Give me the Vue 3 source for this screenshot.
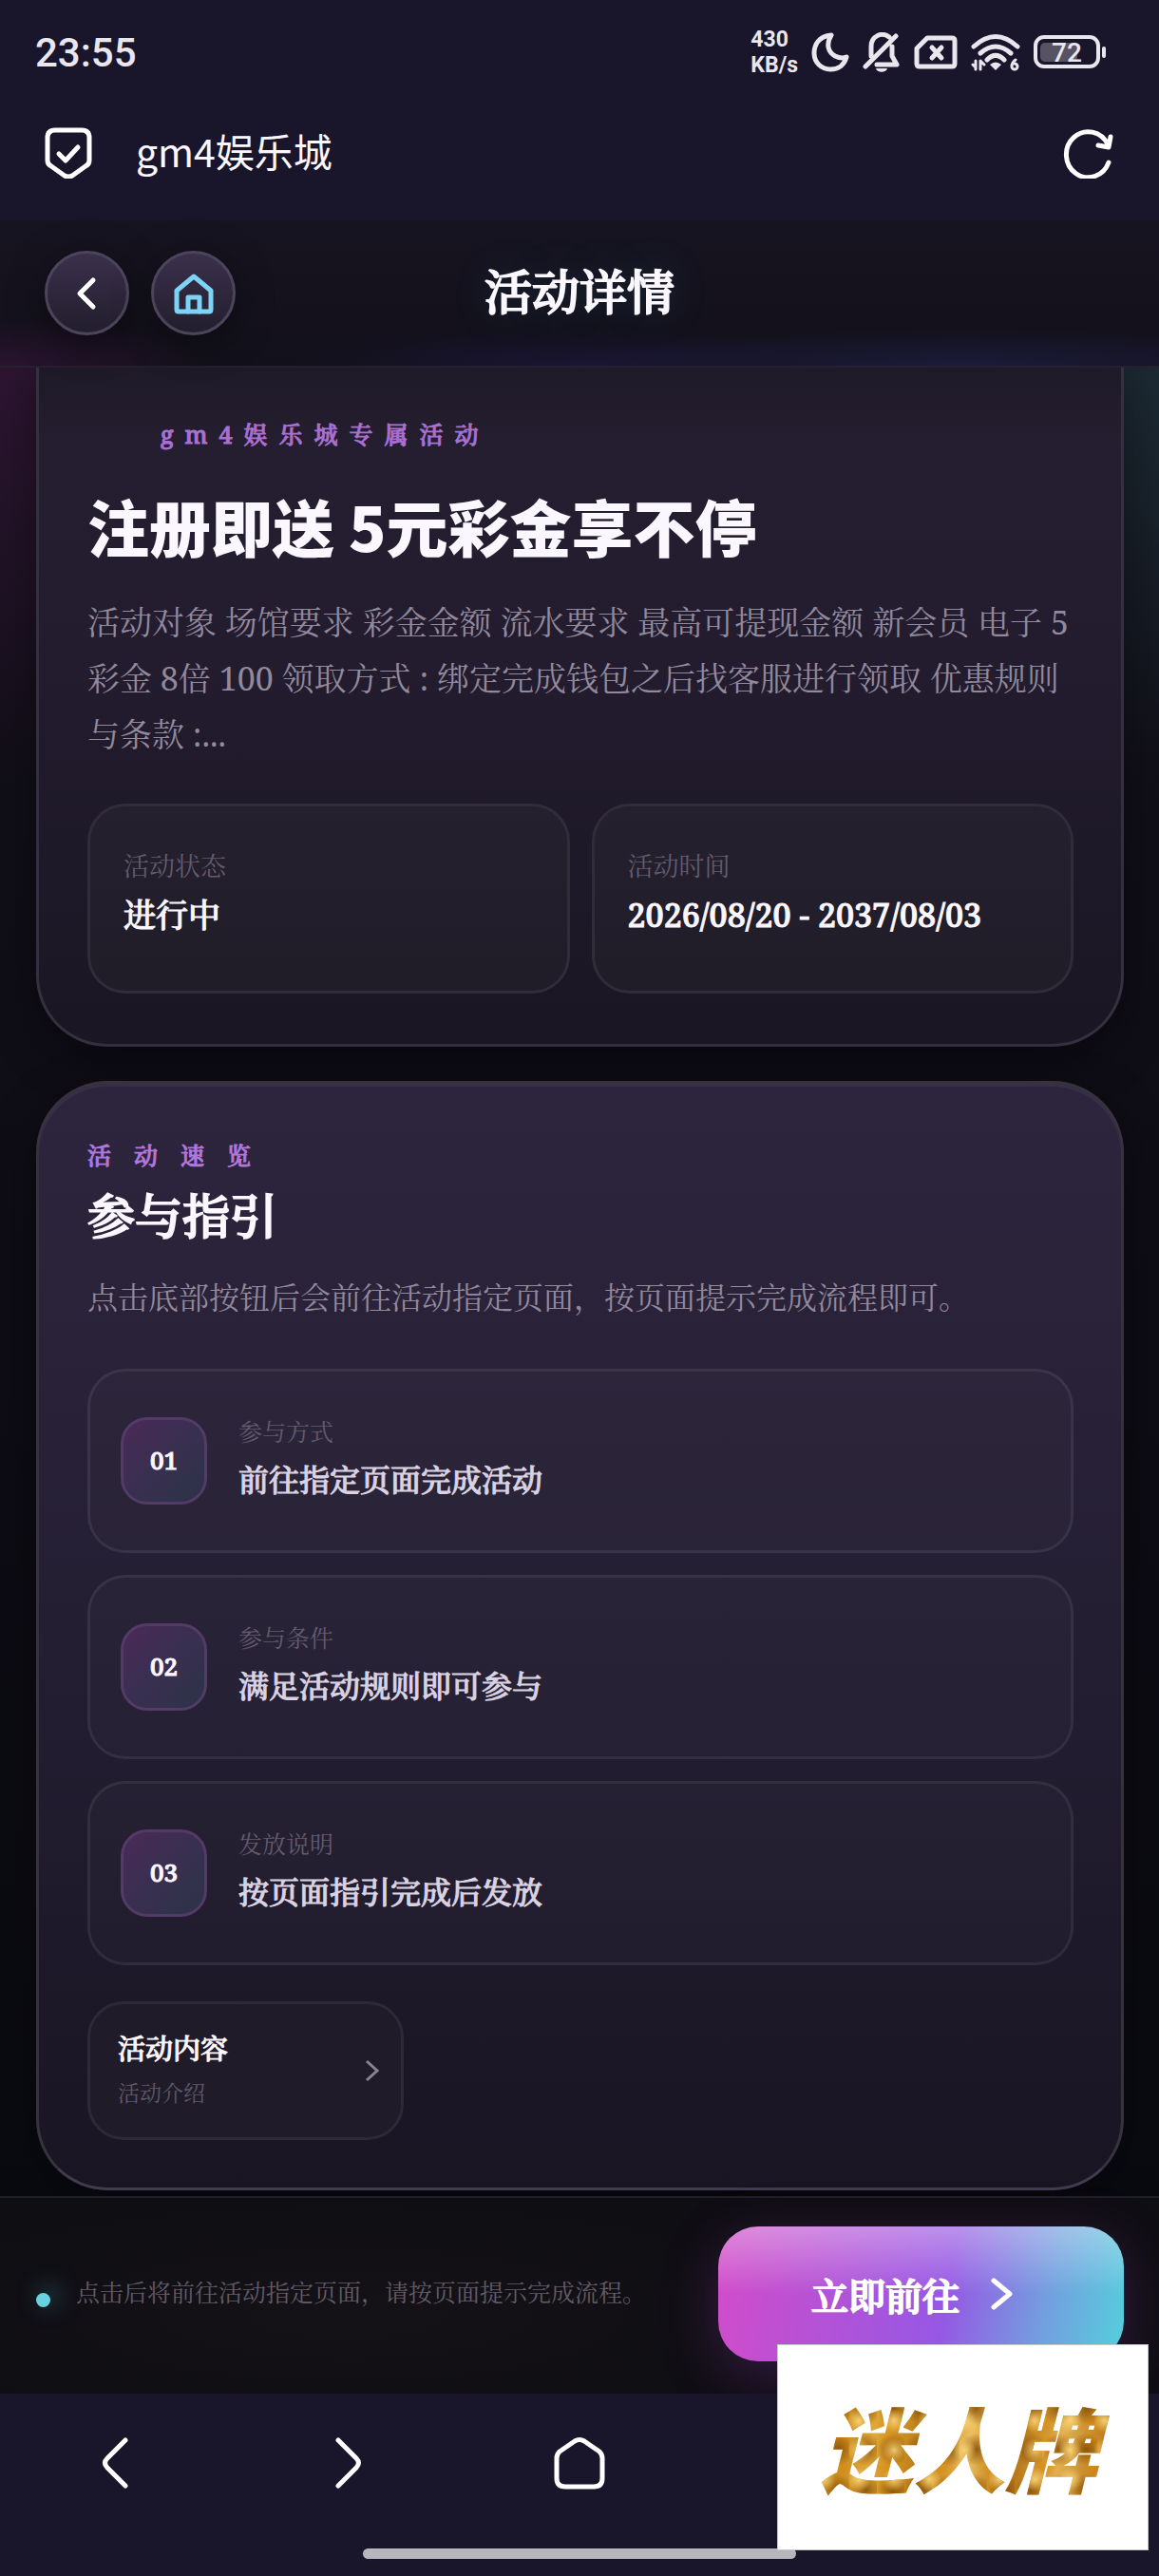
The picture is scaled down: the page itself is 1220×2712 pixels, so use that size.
<script setup>
import { ref } from 'vue';

const siteName = ref('gm4娱乐城');

const stats = [
  { label: '活动状态', value: '进行中' },
  { label: '活动时间', value: '2026/08/20 - 2037/08/03' },
];

const steps = [
  { no: '01', label: '参与方式', value: '前往指定页面完成活动' },
  { no: '02', label: '参与条件', value: '满足活动规则即可参与' },
  { no: '03', label: '发放说明', value: '按页面指引完成后发放' },
];
</script>

<template>
  <div class="page">
    <div class="status-bar">
      <span class="clock">23:55</span>
      <div class="status-icons">
        <span class="speed">430<br>KB/s</span>
        <svg class="i-moon" width="40" height="42" viewBox="0 0 40 42">
          <path d="M21 3C8 4 3 13 3 22c0 10 8 17 17 17s15-5 17-13c-4 2-8 1-12-1-7-4-10-12-4-22z" />
        </svg>
        <svg class="i-bell" width="40" height="42" viewBox="0 0 40 42">
          <path d="M3 36L35 4M28 5C20-1 9 4 9 15v10M31 15v10l5 9H15" />
          <path class="solid" d="M14 38h12c-1 5-11 5-12 0z" />
        </svg>
        <svg class="i-sim" width="46" height="36" viewBox="0 0 46 36">
          <path d="M14 3h26q3 0 3 3v24q0 3-3 3H6q-3 0-3-3V14z M19 13l10 11M29 13L19 24" />
        </svg>
        <svg class="i-wifi" width="52" height="40" viewBox="0 0 52 40">
          <path d="M3 14Q26-7 49 14M10 21Q26 7 42 21M17 28Q26 19 35 28" />
          <path class="solid" d="M20 33q6-5 12 0l-6 6z" />
          <path class="thin" d="M2 33l3 3V29M5 29v9M10 38V29l4 4M47 28q-4 3-4 7a3 3 0 1 0 3-3" />
        </svg>
        <svg class="i-battery" width="76" height="36" viewBox="0 0 76 36">
          <rect class="level" x="7" y="8" width="39" height="20" rx="5" />
          <rect class="shell" x="2" y="2" width="66" height="31" rx="9" />
          <rect class="solid" x="72" y="12" width="4" height="12" rx="2" />
          <text x="35" y="28" text-anchor="middle">72</text>
        </svg>
      </div>
    </div>

    <div class="browser-bar">
      <svg width="50" height="54" viewBox="0 0 50 54">
        <path d="M11 3h28q8 0 8 8v24q0 4-4 6L29 51q-4 2-8 0L7 41q-4-2-4-6V11q0-8 8-8z" />
        <path d="M15 28l7 7 13-14" />
      </svg>
      <span class="site">{{ siteName }}</span>
      <button class="plain" aria-label="刷新">
        <svg width="54" height="54" viewBox="0 0 54 54">
          <path d="M48 37A23 24 0 1 1 47 18" />
          <path d="M50 10l-2 11-11-2" />
        </svg>
      </button>
    </div>

    <header class="header">
      <div class="header-buttons">
        <button class="round" aria-label="返回">
          <svg width="40" height="40" viewBox="0 0 40 40"><path d="M26 6L12 20l14 14" /></svg>
        </button>
        <button class="round home" aria-label="首页">
          <svg width="44" height="44" viewBox="0 0 44 44">
            <path d="M4 19L22 4l18 15v20q0 2-2 2H6q-2 0-2-2z" />
            <path d="M16 41V26h12v15" />
          </svg>
        </button>
      </div>
      <h1>活动详情</h1>
    </header>

    <main class="content">
      <section class="card hero">
        <p class="eyebrow">gm4娱乐城专属活动</p>
        <h2>注册即送 5元彩金享不停</h2>
        <p class="desc">
          活动对象 场馆要求 彩金金额 流水要求 最高可提现金额 新会员 电子 5彩金 8倍 100 领取方式 : 绑定完成钱包之后找客服进行领取 优惠规则与条款 :...
        </p>
        <div class="stats">
          <div v-for="s in stats" :key="s.label" class="stat">
            <span class="label">{{ s.label }}</span>
            <strong>{{ s.value }}</strong>
          </div>
        </div>
      </section>

      <section class="card guide">
        <p class="eyebrow">活动速览</p>
        <h3>参与指引</h3>
        <p class="desc">点击底部按钮后会前往活动指定页面，按页面提示完成流程即可。</p>
        <div class="steps">
          <div v-for="s in steps" :key="s.no" class="step">
            <span class="no">{{ s.no }}</span>
            <div class="step-text">
              <span class="label">{{ s.label }}</span>
              <strong>{{ s.value }}</strong>
            </div>
          </div>
        </div>
        <button class="tab">
          <span class="tab-text">
            <strong>活动内容</strong>
            <small>活动介绍</small>
          </span>
          <svg width="16" height="24" viewBox="0 0 16 24"><path d="M2 2l11 10L2 22" /></svg>
        </button>
      </section>
    </main>

    <footer class="action-bar">
      <span class="dot"></span>
      <p>点击后将前往活动指定页面，请按页面提示完成流程。</p>
      <button class="go">
        立即前往
        <svg width="24" height="34" viewBox="0 0 24 34"><path d="M3 3l17 14L3 31" /></svg>
      </button>
    </footer>

    <nav class="nav-bar">
      <button class="plain" aria-label="后退">
        <svg width="54" height="54" viewBox="0 0 54 54"><path d="M37 3L18 22q-5 5 0 10l19 19" /></svg>
      </button>
      <button class="plain" aria-label="前进">
        <svg width="54" height="54" viewBox="0 0 54 54"><path d="M17 3l19 19q5 5 0 10L17 51" /></svg>
      </button>
      <button class="plain" aria-label="主页">
        <svg width="54" height="56" viewBox="0 0 54 56">
          <path d="M22 5q5-3 10 0l16 11q3 3 3 7v21q0 9-9 9H12q-9 0-9-9V23q0-4 3-7z" />
        </svg>
      </button>
    </nav>
    <div class="handle"></div>

    <div class="brand"><span>迷人牌</span></div>
  </div>
</template>

<style>
body {
  background: #19152b;
}
</style>

<style scoped>
.page {
  position: relative;
  display: flex;
  flex-direction: column;
  min-height: 100vh;
  color: #fbf7ff;
  background: #19152b;
  font-family: 'Noto Serif', 'Noto Serif CJK SC', 'Noto Sans CJK SC', serif;
}

h1, h2, h3, p {
  margin: 0;
}

button {
  padding: 0;
  border: 0;
  color: inherit;
  background: none;
  font-family: inherit;
  cursor: pointer;
}

/* regular cut thickened evenly, the serif bold has too much contrast */
h1, h3, strong, .eyebrow, .no, .go {
  font-weight: 500;
  -webkit-text-stroke: 1px currentColor;
}

h1, h3, .go {
  -webkit-text-stroke-width: 2px;
}

svg {
  display: block;
  flex: none;
  fill: none;
  stroke: #fff;
  stroke-width: 5;
  stroke-linecap: round;
  stroke-linejoin: round;
}

/* system bars */
.status-bar {
  display: flex;
  align-items: center;
  justify-content: space-between;
  height: 110px;
  padding: 0 56px 0 37px;
  color: #e9e6ee;
  font-family: Roboto, sans-serif;
}

.clock {
  font-size: 42px;
  font-weight: 500;
}

.status-icons {
  display: flex;
  align-items: center;
  gap: 14px;
}

.status-icons svg {
  stroke: #e9e6ee;
}

.status-icons .solid {
  fill: #e9e6ee;
  stroke: none;
}

.speed {
  font-size: 23px;
  font-weight: 700;
  line-height: 27px;
}

.i-wifi .thin {
  stroke-width: 3;
}

.i-battery .shell {
  stroke-width: 4;
}

.i-battery .level {
  fill: #575363;
  stroke: none;
}

.i-battery text {
  fill: #e9e6ee;
  stroke: none;
  font-size: 28px;
  font-weight: 500;
}

.browser-bar {
  display: flex;
  align-items: center;
  height: 102px;
  padding: 0 47px 20px;
  font-family: 'Noto Sans CJK SC', sans-serif;
}

.site {
  flex: 1;
  margin-left: 46px;
  padding-bottom: 6px;
  font-size: 41px;
}

/* page header */
.header {
  position: relative;
  display: flex;
  align-items: center;
  justify-content: center;
  height: 153px;
  border-bottom: 2px solid #24202f;
  background:
    radial-gradient(220px 50px at 0 100%, #2a142f, transparent),
    radial-gradient(420px 40px at 83% 100%, #1c1b3a, transparent),
    radial-gradient(300px 40px at 50% 100%, #1a1533, transparent),
    linear-gradient(#171421, #12101a);
}

.header h1 {
  padding-bottom: 4px;
  font-size: 50px;
  line-height: 60px;
  text-shadow: 0 0 40px rgba(60, 160, 190, 0.3);
}

.header-buttons {
  position: absolute;
  left: 47px;
  display: flex;
  gap: 23px;
}

.round {
  display: flex;
  align-items: center;
  justify-content: center;
  width: 89px;
  height: 89px;
  border: 3px solid #4b445a;
  border-radius: 50%;
  background: linear-gradient(#3b304c, #221e2d);
  box-shadow: 0 8px 40px rgba(0, 0, 0, 0.4);
}

.home svg {
  stroke: #7dd3f5;
}

/* cards */
.content {
  display: flex;
  flex: 1;
  flex-direction: column;
  gap: 36px;
  padding: 0 37px 6px 38px;
  background:
    radial-gradient(240px 440px at 0 0, #2d1531, transparent),
    radial-gradient(260px 440px at 100% 0, #1c2a33, transparent),
    linear-gradient(#12101a, #0e0c14 50%, #090a10);
}

.card {
  padding: 55px 50px 50px 51px;
  border: 3px solid #38323f;
  border-radius: 75px;
  box-shadow: 0 16px 50px rgba(0, 0, 0, 0.35);
}

.hero {
  padding-top: 50px;
  padding-bottom: 53px;
  border-top: 0;
  border-color: #35303f;
  border-top-left-radius: 0;
  border-top-right-radius: 0;
  background: linear-gradient(#1f1a28, #241e30 12%, #221c2e 45%, #1a1623);
}

.guide {
  border-bottom-color: #423b50;
  background: linear-gradient(#2d253d, #251f34 45%, #191523);
  box-shadow: inset 0 3px #372f47, 0 16px 50px rgba(0, 0, 0, 0.35);
}

.eyebrow {
  color: #b277dc;
  font-size: 25px;
  line-height: 40px;
  letter-spacing: 24px;
}

.hero .eyebrow {
  padding-left: 77px;
  color: #a970d2;
  letter-spacing: 12px;
}

.hero h2 {
  margin-top: 36px;
  font-family: 'Noto Sans CJK SC', sans-serif;
  font-size: 65px;
  font-weight: 900;
  line-height: 80px;
}

.guide h3 {
  margin-top: 14px;
  font-size: 50px;
  line-height: 60px;
}

.desc {
  margin-top: 33px;
  color: #92899d;
  font-size: 34px;
  font-weight: 400;
  line-height: 59px;
}

.guide .desc {
  margin-top: 26px;
  font-size: 32px;
}

.label {
  color: #625b6c;
  font-size: 27px;
  line-height: 40px;
}

.stats {
  display: grid;
  grid-template-columns: 1fr 1fr;
  gap: 23px;
  margin-top: 43px;
}

.stat {
  display: flex;
  flex-direction: column;
  gap: 6px;
  padding: 43px 35px 55px;
  border: 3px solid #312c3a;
  border-radius: 40px;
  background: linear-gradient(#25202e, #201c28);
}

.stat strong {
  font-size: 34px;
  line-height: 50px;
}

.steps {
  display: flex;
  flex-direction: column;
  gap: 23px;
  margin-top: 46px;
}

.step {
  display: flex;
  align-items: center;
  gap: 33px;
  padding: 43px 32px;
  border: 3px solid rgba(255, 255, 255, 0.07);
  border-radius: 40px;
  background: rgba(255, 255, 255, 0.02);
}

.step .no {
  display: flex;
  align-items: center;
  justify-content: center;
  box-sizing: border-box;
  width: 91px;
  height: 92px;
  padding-bottom: 2px;
  border: 3px solid #533a67;
  border-radius: 28px;
  background: linear-gradient(135deg, #4a2a57, #392f50 50%, #2b3447);
  font-size: 26px;
}

.step-text {
  display: flex;
  flex-direction: column;
  gap: 6px;
  padding-bottom: 6px;
}

.step .label {
  font-size: 25px;
}

.step strong {
  color: #dad3e3;
  font-size: 32px;
  line-height: 50px;
}

.tab {
  display: flex;
  align-items: center;
  justify-content: space-between;
  width: 333px;
  height: 146px;
  margin-top: 38px;
  padding: 0 22px 0 29px;
  border: 3px solid #2d2937;
  border-radius: 38px;
  background: #1f1b28;
  text-align: left;
}

.tab-text {
  display: flex;
  flex-direction: column;
  gap: 6px;
}

.tab strong {
  font-size: 29px;
  line-height: 40px;
}

.tab small {
  color: #5f5868;
  font-size: 23px;
  line-height: 40px;
}

.tab svg {
  stroke: #8a8394;
  stroke-width: 3;
  stroke-linecap: butt;
  stroke-linejoin: miter;
}

/* bottom action bar */
.action-bar {
  display: flex;
  align-items: center;
  padding: 30px 37px 34px 38px;
  border-top: 2px solid #201d26;
  background: radial-gradient(500px 120px at 30% 60%, #141217, #0f0e13);
}

.dot {
  width: 15px;
  height: 15px;
  margin-top: 12px;
  border-radius: 50%;
  background: #68d3e0;
  box-shadow: 6px -4px 24px rgba(80, 200, 220, 0.6);
}

.action-bar p {
  flex: 1;
  margin-left: 27px;
  padding-bottom: 4px;
  color: #625b69;
  font-size: 25px;
  line-height: 40px;
}

.go {
  display: flex;
  align-items: center;
  justify-content: center;
  gap: 33px;
  width: 427px;
  height: 142px;
  padding-right: 18px;
  border-radius: 42px;
  background:
    linear-gradient(rgba(255, 255, 255, 0.34), transparent 50%),
    linear-gradient(100deg, #d24cc9, #9658e4 56%, #72a0df 80%, #54cfdc);
  box-shadow: 0 16px 60px rgba(150, 60, 190, 0.28);
  color: #fff;
  font-size: 39px;
}

.nav-bar {
  display: grid;
  grid-template-columns: repeat(5, 1fr);
  align-items: center;
  justify-items: center;
  height: 145px;
  background: #19152b;
}

.handle {
  align-self: center;
  width: 456px;
  height: 11px;
  margin: 18px 0;
  border-radius: 6px;
  background: #b8b6bd;
}

/* floating brand plate */
.brand {
  position: absolute;
  right: 11px;
  bottom: 27px;
  display: flex;
  align-items: center;
  justify-content: center;
  box-sizing: border-box;
  width: 391px;
  height: 217px;
  border: 1px solid #c9c9cc;
  background: #fff;
}

.brand span {
  padding: 0 16px 4px 8px;
  background:
    radial-gradient(circle at 30% 40%, rgba(250, 214, 120, 0.9), transparent 40%) 0 0 / 37px 31px,
    radial-gradient(circle at 60% 60%, rgba(132, 76, 6, 0.85), transparent 55%) 9px 5px / 29px 43px,
    radial-gradient(circle at 50% 50%, rgba(216, 140, 20, 0.8), transparent 60%) 3px 11px / 53px 23px,
    linear-gradient(100deg, #a96c10, #e0a838 22%, #b97a16 38%, #ecc060 52%, #b07010 66%, #e4b252 80%, #a0620c);
  -webkit-background-clip: text;
  background-clip: text;
  color: transparent;
  font-family: 'Noto Sans CJK SC', sans-serif;
  font-size: 97px;
  font-style: italic;
  font-weight: 900;
  line-height: 140px;
}
</style>
